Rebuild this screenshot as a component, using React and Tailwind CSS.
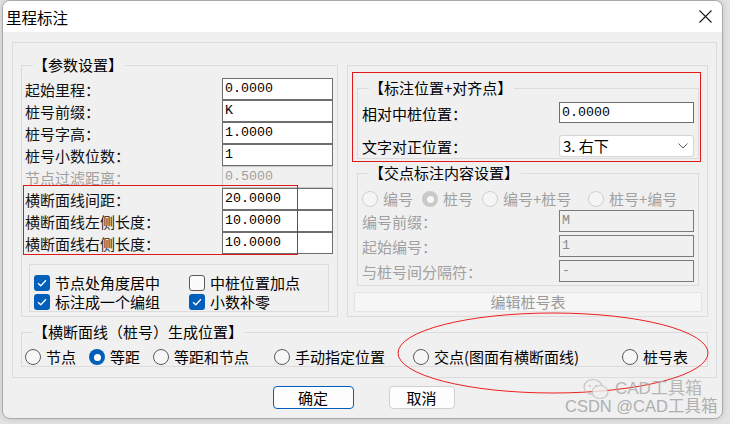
import React from "react";

const Check = () => (
   <svg width="10" height="8" viewBox="0 0 10 8" fill="none">
      <path d="M1 4.2 L3.8 6.8 L9 1.2" stroke="white" strokeWidth="1.3" />
   </svg>
);

const CheckBox = ({ checked, label }) => (
   <div className="flex items-center gap-[5px] h-[19px]">
      {checked ? (
         <span className="w-[16px] h-[16px] rounded-[3px] bg-[#005fb8] flex items-center justify-center">
            <Check />
         </span>
      ) : (
         <span className="w-[16px] h-[16px] rounded-[3px] border border-[#5a5a5a] bg-[#fbfbfb]" />
      )}
      <span className="leading-[19px]">{label}</span>
   </div>
);

const Radio = ({ checked, disabled, label, w }) => {
   let dot;
   if (checked && !disabled) {
      dot = (
         <span className="w-[16px] h-[16px] rounded-full bg-[#005fb8] flex items-center justify-center">
            <span className="w-[7px] h-[7px] rounded-full bg-white" />
         </span>
      );
   } else if (checked) {
      dot = (
         <span className="w-[16px] h-[16px] rounded-full bg-[#c9c9c9] flex items-center justify-center">
            <span className="w-[7px] h-[7px] rounded-full bg-[#f7f7f7]" />
         </span>
      );
   } else if (disabled) {
      dot = <span className="w-[16px] h-[16px] rounded-full border border-[#cfcfcf] bg-[#f5f5f5]" />;
   } else {
      dot = <span className="w-[16px] h-[16px] rounded-full border border-[#5a5a5a] bg-[#f7f7f7]" />;
   }
   return (
      <div
         className={`flex items-center gap-[5px] h-[18px] shrink-0 ${disabled ? "text-[#a0a0a0]" : ""}`}
         style={{ width: w }}
      >
         {dot}
         <span className="leading-[18px] whitespace-nowrap">{label}</span>
      </div>
   );
};

const Group = ({ label, className, children }) => (
   <div className={`relative border border-[#dcdcdc] ${className}`}>
      {label && (
         <span className="absolute left-[11px] -top-[10px] bg-[#f0f0f0] leading-[18px] pr-[2px] whitespace-nowrap">
            {label}
         </span>
      )}
      {children}
   </div>
);

const mono = "font-['Liberation_Mono',monospace] text-[13.3px]";

const ParamRow = ({ label, value, disabled }) => (
   <div className="flex items-center justify-between h-[22px]">
      <span className={`pt-[3px] ${disabled ? "text-[#a0a0a0]" : "text-[#111]"}`}>{label}</span>
      <div
         className={`w-[111px] h-[22px] border px-[2px] leading-[20px] ${mono} ${
            disabled
               ? "bg-[#f0f0f0] border-[#c8c8c8] text-[#a0a0a0]"
               : "bg-white border-[#6e6e6e] text-black"
         }`}
      >
         {value}
      </div>
   </div>
);

const GreyRow = ({ label, value }) => (
   <div className="flex items-center justify-between h-[22px]">
      <span className="pt-[3px] text-[#a0a0a0]">{label}</span>
      <div className={`w-[135px] h-[22px] border border-[#7a7a7a] bg-[#f0f0f0] px-[2px] leading-[20px] text-[#8a8a8a] ${mono}`}>
         {value}
      </div>
   </div>
);

export default function App() {
   return (
      <div className="relative w-[730px] h-[424px] bg-[#e3e3e3] overflow-hidden font-['Noto_Sans_CJK_SC',sans-serif] text-[15px] text-black">
         <div className="ml-[2px] w-[721px] h-[419px] border border-[#a9a9a9] rounded-lg overflow-hidden bg-[#f0f0f0] shadow-[0_0_6px_rgba(0,0,0,0.15)]">
            {/* title bar */}
            <div className="h-[31px] bg-white flex items-center justify-between pl-[3px] pr-[10px]">
               <span className="text-[15.5px] leading-[20px] pt-[1px]">里程标注</span>
               <svg width="13" height="13" viewBox="0 0 13 13">
                  <path d="M0.5 0.5 L12.5 12.5 M12.5 0.5 L0.5 12.5" stroke="#1a1a1a" strokeWidth="1.1" />
               </svg>
            </div>

            <div className="pt-[10px] pl-[9px]">
               <div className="w-[705px] h-[336px] border border-[#dcdcdc] px-[8px] pt-[22px]">
                  <div className="flex gap-[9px]">
                     {/* left: parameters */}
                     <Group label="【参数设置】" className="w-[317px] h-[252px]">
                        <div className="relative pt-[12px] pl-[3px] pr-[4px]">
                           <ParamRow label="起始里程：" value="0.0000" />
                           <ParamRow label="桩号前缀：" value="K" />
                           <ParamRow label="桩号字高：" value="1.0000" />
                           <ParamRow label="桩号小数位数：" value="1" />
                           <ParamRow label="节点过滤距离：" value="0.5000" disabled />
                           <ParamRow label="横断面线间距：" value="20.0000" />
                           <ParamRow label="横断面线左侧长度：" value="10.0000" />
                           <ParamRow label="横断面线右侧长度：" value="10.0000" />
                           <div className="absolute left-[1px] top-[119px] w-[275px] h-[70px] border border-[#e01818] pointer-events-none" />
                           <div className="mt-[10px] ml-[4px] w-[300px] h-[48px] border border-[#dcdcdc] pt-[8px] pl-[4px] grid grid-cols-[155px_1fr]">
                              <CheckBox checked label="节点处角度居中" />
                              <CheckBox label="中桩位置加点" />
                              <CheckBox checked label="标注成一个编组" />
                              <CheckBox checked label="小数补零" />
                           </div>
                        </div>
                     </Group>

                     {/* right */}
                     <Group className="w-[361px] h-[252px]">
                        <div className="relative pl-[6px] pt-[22px]">
                           <div className="absolute left-[4px] top-[6px] w-[349px] h-[90px] border border-[#e01818] pointer-events-none" />
                           <Group label="【标注位置+对齐点】" className="ml-[3px] w-[342px] h-[71px]">
                              <div className="pt-[13px] px-[4px]">
                                 <div className="flex items-center justify-between h-[21px]">
                                    <span className="pt-[3px]">相对中桩位置：</span>
                                    <div className={`w-[135px] h-[21px] border border-[#6e6e6e] bg-white px-[2px] leading-[19px] ${mono}`}>
                                       0.0000
                                    </div>
                                 </div>
                                 <div className="flex items-center justify-between h-[22px] mt-[12px]">
                                    <span className="pt-[3px]">文字对正位置：</span>
                                    <div className="w-[135px] h-[22px] border border-[#d5d5d5] rounded-[3px] bg-white flex items-center justify-between pl-[3px] pr-[5px]">
                                       <span className="leading-[20px]">3. 右下</span>
                                       <svg width="10" height="6" viewBox="0 0 10 6">
                                          <path d="M0.5 0.5 L5 5 L9.5 0.5" fill="none" stroke="#5c5c5c" strokeWidth="1" />
                                       </svg>
                                    </div>
                                 </div>
                              </div>
                           </Group>

                           <Group label="【交点标注内容设置】" className="ml-[3px] mt-[14px] w-[342px] h-[113px]">
                              <div className="pt-[16px] px-[4px]">
                                 <div className="flex">
                                    <Radio disabled label="编号" w={60} />
                                    <Radio disabled checked label="桩号" w={60} />
                                    <Radio disabled label="编号+桩号" w={106} />
                                    <Radio disabled label="桩号+编号" w={100} />
                                 </div>
                                 <div className="mt-[2px] flex flex-col gap-[3px]">
                                    <GreyRow label="编号前缀：" value="M" />
                                    <GreyRow label="起始编号：" value="1" />
                                    <GreyRow label="与桩号间分隔符：" value="-" />
                                 </div>
                              </div>
                           </Group>

                           <div className="mt-[6px] w-[348px] h-[20px] rounded-[3px] border border-[#e3e3e3] bg-[#f6f6f6] text-[#9a9a9a] flex items-center justify-center leading-[18px]">
                              编辑桩号表
                           </div>
                        </div>
                     </Group>
                  </div>

                  <Group label="【横断面线（桩号）生成位置】" className="mt-[15px] w-[687px] h-[35px]">
                     <div className="flex pt-[15px] pl-[3px]">
                        <Radio label="节点" w={64} />
                        <Radio checked label="等距" w={64} />
                        <Radio label="等距和节点" w={121} />
                        <Radio label="手动指定位置" w={139} />
                        <Radio label="交点(图面有横断面线)" w={209} />
                        <Radio label="桩号表" w={70} />
                     </div>
                  </Group>
               </div>

               {/* buttons */}
               <div className="mt-[8px] -ml-[7px] flex justify-center gap-[35px]">
                  <div className="w-[81px] h-[23px] rounded-[4px] border border-[#005fb8] bg-[#fdfdfd] flex items-center justify-center leading-[20px]">
                     确定
                  </div>
                  <div className="w-[66px] h-[23px] rounded-[4px] border border-[#d0d0d0] bg-[#fdfdfd] flex items-center justify-center leading-[20px]">
                     取消
                  </div>
               </div>
            </div>
         </div>

         {/* annotation ellipse */}
         <svg className="absolute left-[396px] top-[311px] pointer-events-none" width="314" height="84" viewBox="0 0 314 84">
            <ellipse cx="157" cy="42" rx="155" ry="40" fill="none" stroke="#ee2020" strokeWidth="1" />
         </svg>

         {/* watermark */}
         <div className="absolute left-[583px] top-[378px] flex items-center gap-[6px] text-[#a8a8a8] opacity-80 whitespace-nowrap">
            <svg width="26" height="22" viewBox="0 0 26 22">
               <ellipse cx="10" cy="9" rx="9" ry="7.5" fill="none" stroke="#bdbdbd" strokeWidth="1.2" />
               <ellipse cx="17" cy="14" rx="8" ry="6.5" fill="#f0f0f0" stroke="#bdbdbd" strokeWidth="1.2" />
               <circle cx="7" cy="8" r="1" fill="#bdbdbd" />
               <circle cx="13" cy="8" r="1" fill="#bdbdbd" />
            </svg>
            <span className="font-['Liberation_Sans','Noto_Sans_CJK_SC',sans-serif] text-[17px] leading-[22px]">CAD工具箱</span>
         </div>
         <div className="absolute left-[565px] top-[395px] whitespace-nowrap font-['Liberation_Sans','Noto_Sans_CJK_SC',sans-serif] text-[16.5px] leading-[22px] text-[#a0a0a0] opacity-80">
            CSDN @CAD工具箱
         </div>
      </div>
   );
}
